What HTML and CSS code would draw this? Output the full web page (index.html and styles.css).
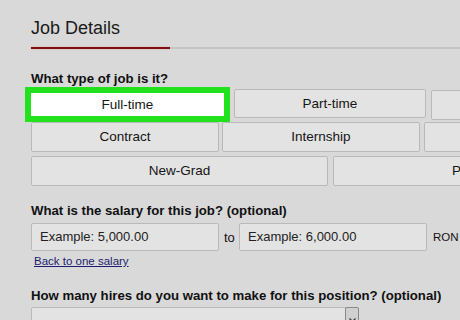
FILE: index.html
```html
<!DOCTYPE html>
<html lang="en">
<head>
<meta charset="UTF-8">
<title>Job Details</title>
<link rel="stylesheet" href="styles.css">
</head>
<body>

<div class="page">
  <h1 class="title">Job Details</h1>
  <div class="tabline"><span class="tab-active"></span></div>

  <div class="label">What type of job is it?</div>
  <div class="row row1">
    <div class="opt selected">Full-time</div>
    <div class="opt w-part">Part-time</div>
    <div class="opt w-rest"></div>
  </div>
  <div class="row row2">
    <div class="opt w-contract">Contract</div>
    <div class="opt w-intern">Internship</div>
    <div class="opt w-rest"></div>
  </div>
  <div class="row row3">
    <div class="opt w-grad">New-Grad</div>
    <div class="opt w-rest left">P</div>
  </div>

  <div class="label salary-label">What is the salary for this job? (optional)</div>
  <div class="salary">
    <div class="input">Example: 5,000.00</div>
    <span class="to">to</span>
    <div class="input">Example: 6,000.00</div>
    <span class="cur">RON</span>
  </div>
  <a class="back" href="#">Back to one salary</a>

  <div class="label hires-label">How many hires do you want to make for this position? (optional)</div>
  <div class="select">
    <span class="arrow">
      <svg width="7" height="5" viewBox="0 0 7 5"><polyline points="0.5,0.5 3.5,3.5 6.5,0.5" fill="none" stroke="#333" stroke-width="1.2"/></svg>
    </span>
  </div>
</div>

</body>
</html>
```

FILE: styles.css
```css
body { margin: 0; background: #d9d9d9; font-family: "Liberation Sans", Arial, sans-serif; color: #111; overflow: hidden; }
.page { padding: 18px 0 0 31px; width: 429px; }
.title { margin: 0; font-size: 18px; font-weight: normal; line-height: 20px; color: #1a1a1a; }
.tabline {
  margin-top: 9px;
  height: 2px;
  background: #c4c4c4;
}
.tab-active {
  display: block;
  width: 139px;
  height: 2px;
  background: #7a1010;
  box-shadow: 0 0 2px #e9a0a0;
}
.label { font-size: 13.2px; font-weight: bold; margin-top: 22px; line-height: 15px; white-space: nowrap; }
.row { display: flex; align-items: center; margin-right: -60px; }
.opt {
  box-sizing: border-box;
  height: 30px;
  background: #e3e3e3;
  border: 1px solid #b9b9b9;
  border-radius: 2px;
  font-size: 13.5px;
  line-height: 28px;
  text-align: center;
  color: #151515;
}
.row1 { margin-top: 1px; margin-left: -6px; height: 35px; }
.opt.selected {
  width: 205px;
  height: 35px;
  background: #fff;
  border: 6px solid #22e21e;
  border-radius: 0;
  line-height: 23px;
  margin-right: 4px;
}
.w-part { width: 192px; height: 29px; line-height: 27px; margin-top: -2px; margin-right: 5px; }
.w-rest { flex: 1; }
.left { text-align: right; padding-right: 58px; overflow: hidden; }
.row2 { height: 30px; }
.w-contract { width: 188px; margin-right: 3px; }
.w-intern { width: 198px; margin-right: 4px; }
.row3 { margin-top: 4px; height: 30px; }
.w-grad { width: 297px; margin-right: 5px; }
.salary-label { margin-top: 17px; }
.salary { display: flex; align-items: center; margin-top: 5px; }
.input {
  box-sizing: border-box;
  width: 188px;
  height: 28px;
  background: #e3e3e3;
  border: 1px solid #b9b9b9;
  border-radius: 2px;
  padding-left: 8px;
  line-height: 26px;
  font-size: 13px;
  color: #222;
}
.to { width: 20px; padding-left: 5px; box-sizing: border-box; font-size: 13px; }
.cur { margin-left: 6px; font-size: 11.5px; }
.back { display: inline-block; margin: 3px 0 0 3px; font-size: 11.5px; color: #1c1c70; line-height: 13px; }
.hires-label { margin-top: 19px; }
.select {
  position: relative;
  box-sizing: border-box;
  width: 328px;
  height: 24px;
  margin-top: 4px;
  background: #e3e3e3;
  border: 1px solid #b9b9b9;
  border-radius: 2px;
}
.arrow {
  position: absolute;
  right: -1px;
  top: -1px;
  width: 14px;
  height: 24px;
  box-sizing: border-box;
  border: 1px solid #8a8a8a;
  border-radius: 2px;
  background: #d0d0d0;
  text-align: center;
}
.arrow svg { display: block; margin: 10px auto 0; }
```
